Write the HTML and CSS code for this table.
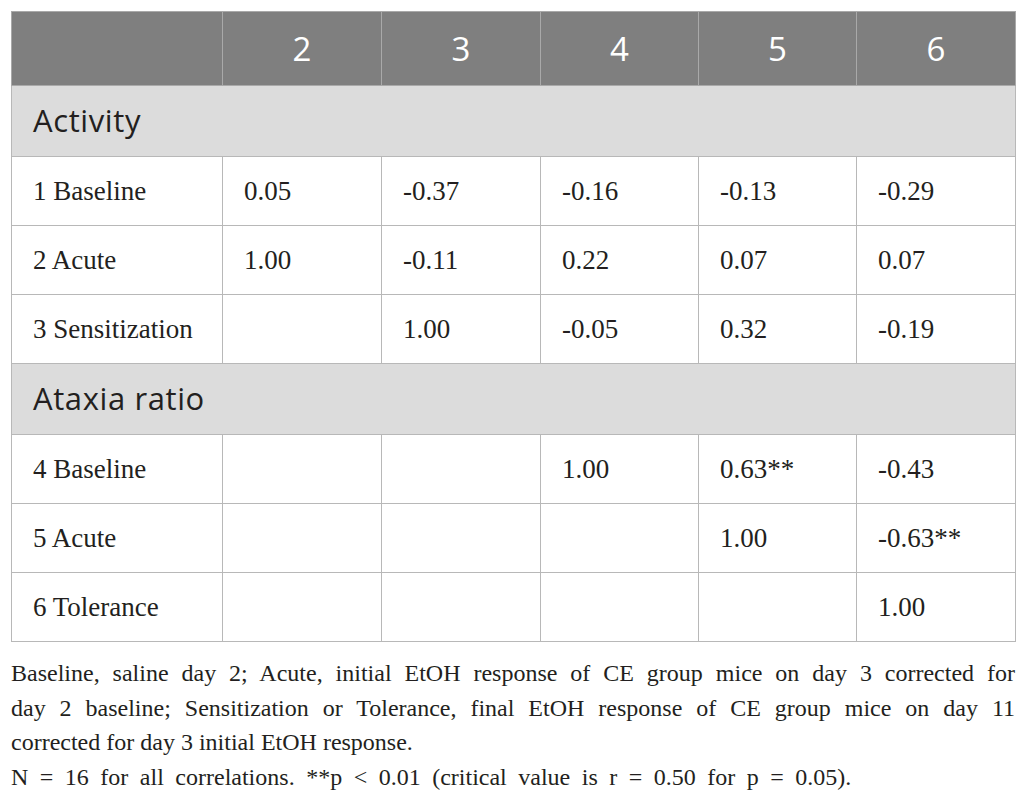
FILE: index.html
```html
<!DOCTYPE html>
<html>
<head>
<meta charset="utf-8">
<link rel="stylesheet" href="styles.css">
</head>
<body>
<div class="page">
  <table class="corr">
    <colgroup>
      <col class="c-label"><col class="c-num"><col class="c-num"><col class="c-num4"><col class="c-num4"><col class="c-num">
    </colgroup>
    <thead>
      <tr class="head">
        <th></th><th>2</th><th>3</th><th>4</th><th>5</th><th>6</th>
      </tr>
    </thead>
    <tbody>
      <tr class="section"><td colspan="6">Activity</td></tr>
      <tr class="row"><td>1 Baseline</td><td>0.05</td><td>-0.37</td><td>-0.16</td><td>-0.13</td><td>-0.29</td></tr>
      <tr class="row"><td>2 Acute</td><td>1.00</td><td>-0.11</td><td>0.22</td><td>0.07</td><td>0.07</td></tr>
      <tr class="row"><td>3 Sensitization</td><td></td><td>1.00</td><td>-0.05</td><td>0.32</td><td>-0.19</td></tr>
      <tr class="section"><td colspan="6">Ataxia ratio</td></tr>
      <tr class="row"><td>4 Baseline</td><td></td><td></td><td>1.00</td><td>0.63**</td><td>-0.43</td></tr>
      <tr class="row"><td>5 Acute</td><td></td><td></td><td></td><td>1.00</td><td>-0.63**</td></tr>
      <tr class="row"><td>6 Tolerance</td><td></td><td></td><td></td><td></td><td>1.00</td></tr>
    </tbody>
  </table>
  <div class="notes">
    <span class="line just">Baseline, saline day 2; Acute, initial EtOH response of CE group mice on day 3 corrected for</span>
    <span class="line just">day 2 baseline; Sensitization or Tolerance, final EtOH response of CE group mice on day 11</span>
    <span class="line">corrected for day 3 initial EtOH response.</span>
    <span class="line wide">N = 16 for all correlations. **p &lt; 0.01 (critical value is r = 0.50 for p = 0.05).</span>
  </div>
</div>
</body>
</html>
```
FILE: styles.css
```css
html, body {
  margin: 0;
  padding: 0;
  background: #ffffff;
}
.page {
  padding: 11px 11px 0 11px;
  width: 1004px;
}
.corr {
  border-collapse: collapse;
  table-layout: fixed;
  width: 1004px;
  color: #231f20;
}
.c-label { width: 211px; }
.c-num { width: 159px; }
.c-num4 { width: 158px; }
.corr td, .corr th {
  border: 1px solid #b8b8b8;
  padding: 0 0 0 21px;
  vertical-align: middle;
}
.head th {
  background: #7f7f7f;
  color: #ffffff;
  font-family: "Open Sans", sans-serif;
  font-weight: 400;
  font-size: 33px;
  line-height: 40px;
  height: 73px;
  padding: 0;
  text-align: center;
  border-color: #a9a9a9;
}
.section td {
  background: #dcdcdc;
  font-family: "Open Sans", sans-serif;
  font-size: 31px;
  line-height: 40px;
  letter-spacing: 0.6px;
  height: 67px;
  padding-left: 21px;
  padding-bottom: 3px;
  color: #231f20;
}
.row td {
  font-family: "Liberation Serif", serif;
  font-size: 27px;
  line-height: 32px;
  height: 68px;
}
.notes {
  margin-top: 14px;
  font-family: "Liberation Serif", serif;
  font-size: 24px;
  line-height: 34.5px;
  color: #231f20;
}
.line {
  display: block;
  white-space: nowrap;
}
.line.just {
  text-align: justify;
  text-align-last: justify;
  white-space: normal;
}
.line.wide {
  word-spacing: 5.5px;
}
```
